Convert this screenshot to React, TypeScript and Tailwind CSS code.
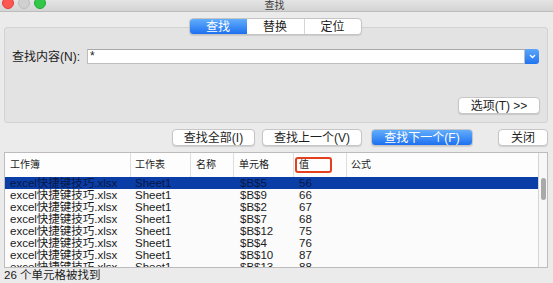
import React from "react";

const rows: [string, string][] = [
  ["$B$5", "56"],
  ["$B$9", "66"],
  ["$B$2", "67"],
  ["$B$7", "68"],
  ["$B$12", "75"],
  ["$B$4", "76"],
  ["$B$10", "87"],
  ["$B$13", "88"],
];

function Btn({ children, className = "" }: { children: React.ReactNode; className?: string }) {
  return (
    <div
      className={
        "h-[17px] flex items-center justify-center rounded-[4px] border border-[#c6c6c6] bg-white text-[12px] text-[#1e1e1e] shadow-[0_1px_1px_rgba(0,0,0,0.12)] leading-none " +
        className
      }
    >
      {children}
    </div>
  );
}

export default function App() {
  return (
    <div className="w-[553px] h-[283px] overflow-hidden flex flex-col bg-[#ebebeb] font-['Liberation_Sans','Noto_Sans_CJK_SC',sans-serif] text-[#1b1b1b]">
      {/* title bar */}
      <div className="h-[12px] shrink-0 grid grid-cols-[1fr_auto_1fr] bg-gradient-to-b from-[#e4e4e4] to-[#d4d4d4] border-b border-[#bdbdbd]">
        <div className="flex gap-[4px] pl-[2px] -mt-[3px] items-start">
          <div className="w-[12px] h-[12px] rounded-full bg-[#fc5753] border border-[#df3e3a]" />
          <div className="w-[12px] h-[12px] rounded-full bg-[#d0d0d0] border border-[#bcbcbc]" />
          <div className="w-[12px] h-[12px] rounded-full bg-[#33c748] border border-[#22a834]" />
        </div>
        <div className="text-[10px] leading-[11px] text-[#3a3a3a] pr-[4px]">查找</div>
        <div />
      </div>

      {/* tabs */}
      <div className="mt-[6px] flex justify-center pr-[3px] relative z-10">
        <div className="flex h-[17px] rounded-[4px] border border-[#c4c4c4] bg-white shadow-[0_1px_1px_rgba(0,0,0,0.1)] text-[12px] leading-none overflow-hidden">
          <div className="w-[57px] flex items-center justify-center text-white bg-gradient-to-b from-[#62adfb] to-[#1c6ff0]">查找</div>
          <div className="w-[57px] flex items-center justify-center">替换</div>
          <div className="w-[57px] flex items-center justify-center border-l border-[#d6d6d6]">定位</div>
        </div>
      </div>

      {/* panel */}
      <div className="-mt-[8px] ml-[4px] mr-[5px] h-[96px] shrink-0 rounded-[3px] border border-[#d2d2d2] bg-[#e3e3e3] flex flex-col">
        <div className="mt-[21px] flex items-center h-[15px] pl-[7px] pr-[8px]">
          <div className="w-[75px] text-[12px] leading-none">查找内容(N):</div>
          <div className="flex-1 h-[15px] bg-white border border-[#bdbdbd] border-t-[#a9a9a9] text-[12px] leading-[13px] pl-[2px]">*</div>
          <div className="w-[14px] h-[15px] rounded-r-[3px] bg-gradient-to-b from-[#5aa6fb] to-[#2173ef] flex items-center justify-center">
            <svg width="7" height="5" viewBox="0 0 7 5">
              <path d="M1 1 L3.5 3.5 L6 1" stroke="white" strokeWidth="1.3" fill="none" />
            </svg>
          </div>
        </div>
        <div className="mt-[33px] flex justify-end pr-[7px]">
          <Btn className="w-[82px]">选项(T) &gt;&gt;</Btn>
        </div>
      </div>

      {/* buttons row */}
      <div className="mt-[6px] flex justify-end pr-[5px] shrink-0">
        <Btn className="w-[83px]">查找全部(I)</Btn>
        <Btn className="w-[100px] ml-[7px]">查找上一个(V)</Btn>
        <Btn className="w-[102px] ml-[9px] text-white border-[#2e7ae9] bg-gradient-to-b from-[#62adfb] to-[#1c6ff0]">查找下一个(F)</Btn>
        <Btn className="w-[50px] ml-[25px]">关闭</Btn>
      </div>

      {/* table */}
      <div className="mt-[6px] ml-[4px] mr-[5px] h-[116px] shrink-0 border border-[#bcbcbc] bg-[#fbfbfb] flex overflow-hidden">
        <div className="flex-1 flex flex-col overflow-hidden">
          <div className="relative h-[24px] shrink-0 grid grid-cols-[125px_60px_43px_60px_53px_1fr] text-[10px] leading-none bg-[#fdfdfd]">
            <div className="flex items-center pl-[5px]">工作簿</div>
            <div className="flex items-center pl-[4px] border-l border-[#dedede]">工作表</div>
            <div className="flex items-center pl-[5px] border-l border-[#dedede]">名称</div>
            <div className="flex items-center pl-[5px] border-l border-[#dedede]">单元格</div>
            <div className="flex items-center pl-[5px] border-l border-[#dedede]">值</div>
            <div className="flex items-center pl-[4px] border-l border-[#dedede]">公式</div>
            <div className="absolute left-[290px] top-[4px] w-[37px] h-[16px] rounded-[3px] border-2 border-[#e2401f]" />
          </div>
          {rows.map(([cell, val], i) => (
            <div
              key={i}
              className={
                "h-[12px] shrink-0 grid grid-cols-[125px_60px_43px_60px_53px_1fr] text-[11.5px] leading-[12px] " +
                (i === 0 ? "bg-[#0b3da6] text-[#061845]" : "text-[#1b1b1b]")
              }
            >
              <div className="pl-[5px] whitespace-nowrap">excel快捷键技巧.xlsx</div>
              <div className="pl-[5px]">Sheet1</div>
              <div />
              <div className="pl-[7px]">{cell}</div>
              <div className="pl-[6px]">{val}</div>
              <div />
            </div>
          ))}
        </div>
        <div className="w-[9px] shrink-0 border-l border-[#d4d4d4] bg-[#f7f7f7] flex flex-col">
          <div className="mt-[25px] ml-[2px] w-[5px] h-[22px] rounded-full bg-[#a9a9a9]" />
        </div>
      </div>

      {/* status */}
      <div className="flex-1 flex items-center pl-[4px] text-[11.5px] leading-none">26 个单元格被找到</div>
    </div>
  );
}
